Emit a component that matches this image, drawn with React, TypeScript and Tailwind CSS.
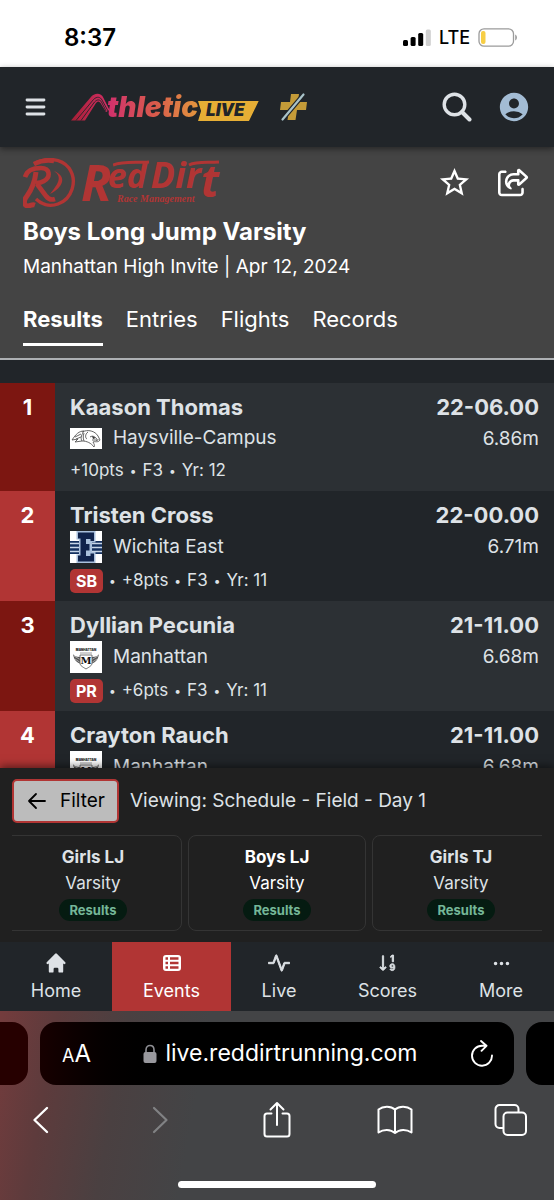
import React from "react";
import { FaRegShareFromSquare } from "react-icons/fa6";
import { HiHome } from "react-icons/hi";
import { MdAccountCircle, MdStarBorder } from "react-icons/md";
import { BsActivity, BsSortNumericDown, BsThreeDots } from "react-icons/bs";

function StatusBar() {
  return (
    <div className="flex h-[67px] shrink-0 items-center justify-between bg-white pt-2 pr-9 pl-16 text-black">
      <span className="text-2xl font-semibold">8:37</span>
      <div className="flex items-center gap-2">
        <svg width="28" height="18" viewBox="0 0 28 18" aria-hidden="true">
          <rect x="0" y="11" width="5" height="6" rx="1.5" />
          <rect x="7.6" y="8" width="5" height="9" rx="1.5" />
          <rect x="15.2" y="4" width="5" height="13" rx="1.5" />
          <rect x="22.8" y="0.5" width="5" height="16.500" rx="1.500" fill="#cfcfcf" />
        </svg>
        <span className="text-lg font-medium">LTE</span>
        <svg width="40" height="19" viewBox="0 0 40 19" aria-hidden="true">
          <rect x="1" y="0.800" width="34.500" height="17.400" rx="5" fill="none" stroke="#9b9b9b" strokeWidth="1.300" />
          <rect x="3" y="3" width="4.500" height="13" rx="2" fill="#f7ce45" />
          <path d="M37.300 6.500c2 .8 2 5.200 0 6z" fill="#8b8b8b" />
        </svg>
      </div>
    </div>
  );
}

function AthleticLogo() {
  return (
    <a href="#live" aria-label="AthleticLIVE" className="ml-6 flex h-8 items-end">
      <svg className="mb-0.5 shrink-0" width="40" height="28" viewBox="0 0 40 28" aria-hidden="true">
        <defs>
          <linearGradient id="swoosh" x1="0" x2="1">
            <stop offset="0" stopColor="#a51f35" />
            <stop offset="1" stopColor="#d52f66" />
          </linearGradient>
        </defs>
        <path
          d="M0 27.500 19.500 4.500C23.500-.5 30-.5 32.500 5L38.500 17l-3.500 2-5.500-9c-1.500-2-3-2-4.500 0L14 27.500z"
          fill="url(#swoosh)"
        />
        <path
          d="M5 27.500 22.500 6.500c3.500-3.500 7-2.500 8.500.5l6 11M10 27.500 23.500 9c3-3 5.500-2.500 7 0l4.500 9"
          fill="none"
          stroke="#212529"
          strokeWidth="0.900"
        />
      </svg>
      <span className="-ml-1 bg-linear-to-r from-[#d12d6c] via-[#d8594b] to-[#e39a3a] bg-clip-text pr-1 text-[28px] leading-8 font-black text-transparent italic">
        thletic
      </span>
      <span className="mb-0.5 -ml-1 flex h-5 items-center bg-[#e6ae35] pr-3.5 pl-2 text-[17px] font-black text-[#212529] italic [clip-path:polygon(0_0,100%_0,84%_100%,0_100%,5%_50%)]">
        LIVE
      </span>
    </a>
  );
}

function AppHeader() {
  return (
    <header className="z-10 flex h-20 shrink-0 items-center bg-[#212529] px-6 shadow-[0_2px_6px_rgba(0,0,0,0.45)]">
      <button type="button" aria-label="Menu">
        <svg width="23" height="20" viewBox="0 0 23 20" stroke="#dee2e6" strokeWidth="2.800" strokeLinecap="round">
          <path d="M3 3h17M3 10h17M3 17h17" />
        </svg>
      </button>
      <AthleticLogo />
      <svg className="ml-[21px] shrink-0" width="28" height="30" viewBox="0 0 28 30" aria-hidden="true">
        <path d="M11 2h8l-1 8h9l-1 8h-9l-1.500 10h-8L9 18H0l1-8h9z" fill="#c49b38" />
        <path d="M2 28 24 2" stroke="#212529" strokeWidth="4.500" />
        <path d="M2.500 27.500 23.500 2.500" stroke="#a9c3c9" strokeWidth="2.200" strokeLinecap="round" />
      </svg>
      <div className="ml-auto flex items-center gap-[26px]">
        <button type="button" aria-label="Search">
          <svg width="30" height="30" viewBox="0 0 30 30" fill="none" stroke="#dee2e6" strokeWidth="3.400" strokeLinecap="round">
            <circle cx="12.500" cy="12.500" r="10.300" />
            <path d="m20 20 7.500 7.500" strokeWidth="4" />
          </svg>
        </button>
        <button type="button" aria-label="Account" className="text-[#a3bcd4]">
          <MdAccountCircle size={34} className="-m-px" />
        </button>
      </div>
    </header>
  );
}

function RedDirtLogo() {
  return (
    <div className="flex h-[52px] items-center gap-1 font-['Open_Sans',sans-serif] text-[#b13534]">
      <svg width="54" height="50" viewBox="0 0 54 50" fill="none" stroke="#b13534" aria-hidden="true">
        <path d="M11 6C22-1 38 0 46 10c9 13 3 31-11 36-9 3-17 0-22-5" strokeWidth="3.400" />
        <path d="M11 6c6-3 14-4 20-3" strokeWidth="4.500" />
        <path d="M2 19c2-7 9-9 16-9 9 0 10 9 3 13-3 2-6 2-8 2" strokeWidth="4.600" />
        <path d="M13 14C12 23 9 31 4 38c-4 5-3 9 0 10 3 0 5-2 8-1" strokeWidth="5" />
        <path d="m14 26 9 12c3 4 6 4 9 3" strokeWidth="4.600" />
        <path d="M31 13c9 6 4 13-4 23 14-7 17-18 4-23Z" fill="#b13534" stroke="none" />
      </svg>
      <div className="relative flex h-full font-bold italic">
        <span className="text-[50px] leading-[50px]">R</span>
        <span className="-ml-1 text-[34px] leading-9">ed</span>
        <span className="ml-1 text-[36px] leading-9">Dir</span>
        <span className="text-[44px] leading-[46px]">t</span>
        <span className="absolute bottom-1 left-9 font-['Liberation_Serif',serif] text-[10px] leading-3 whitespace-nowrap">
          Race Management
        </span>
        <svg className="absolute top-[3px] left-[32px]" width="112" height="8" viewBox="0 0 112 8" fill="none" stroke="#b13534" strokeWidth="3" aria-hidden="true">
          <path d="M0 5c10-4 22-2 36-3M76 5c8-4 18-2 30-3" />
        </svg>
      </div>
    </div>
  );
}

const tabs = ["Results", "Entries", "Flights", "Records"];

function EventHero() {
  return (
    <section className="shrink-0 border-b-2 border-[#adb0b3] bg-[#444] px-[23px] pt-2.5 pb-3 text-white">
      <div className="flex items-start justify-between">
        <RedDirtLogo />
        <div className="flex items-center gap-[26px] pt-2 pr-0.5">
          <button type="button" aria-label="Favorite">
            <MdStarBorder size={35} />
          </button>
          <button type="button" aria-label="Share">
            <FaRegShareFromSquare size={31} />
          </button>
        </div>
      </div>
      <h1 className="mt-[3px] text-2xl leading-10 font-bold">Boys Long Jump Varsity</h1>
      <p className="text-[19px] leading-[30px]">Manhattan High Invite | Apr 12, 2024</p>
      <nav className="mt-[21px] flex gap-[23px] text-[22px] leading-8">
        {tabs.map((tab, i) => (
          <a
            key={tab}
            href={"#" + tab.toLowerCase()}
            className={i === 0 ? "border-b-3 border-white pb-2 font-bold" : "border-b-3 border-transparent pb-2"}
          >
            {tab}
          </a>
        ))}
      </nav>
    </section>
  );
}

function CampusMark() {
  return (
    <svg width="32" height="21" viewBox="0 0 32 21" aria-hidden="true">
      <path fill="#fff" d="M0 0h32v21H0z" />
      <g fill="none" stroke="#555" strokeWidth="0.900">
        <path d="M12 4C18 1 25 3 28 8l2 4c-2 3-5 1-7 2 1 2 2 3 1 5-3-4-7-6-12-6" />
        <path d="M14 3C9 3 6 6 2 12l6-1-3 3 7-1c-2-3 0-7 2-10ZM5 9l6-3M6 11l5-2" />
        <path d="M14 5c-1 3-1 5 0 8M18 4c-3 2-3 6-1 7M20 9c3-2 5 0 7 2M22 12h5" />
      </g>
      <path d="m22 8 4 2-3 1zM26 12l3-1-2 2z" fill="#333" />
    </svg>
  );
}

function EastMark() {
  return (
    <svg width="32" height="32" viewBox="0 0 32 32" aria-hidden="true">
      <path fill="#fff" d="M0 0h32v32H0z" />
      <path fill="#14305f" d="M0 10h32v13H0z" />
      <path d="M0 12.500h32M0 16.500h32M0 20.500h32" stroke="#c8d6e8" strokeWidth="1.300" />
      <path d="M6.500 0h19v11.500H22v9.500h3.500v11h-19v-8.500H9v-15H6.500z" fill="#a9c0dc" />
      <path d="M8 1.500h16V10h-3.500V8H16v5h3.500v6.500H16V25h4.500v-2.500H24v8H8v-6h2.500v-17H8z" fill="#10234c" />
    </svg>
  );
}

function ManhattanMark() {
  return (
    <svg width="32" height="32" viewBox="0 0 32 32" aria-hidden="true">
      <path fill="#fff" d="M0 0h32v32H0z" />
      <text x="16" y="10" textAnchor="middle" fontSize="3" fontWeight="900" fill="#222">MANHATTAN</text>
      <path d="M10 12h12" stroke="#888" strokeWidth="0.800" />
      <path d="M3 13c1 6 3 8 8 10l-1-7c-4 0-6-1-7-3ZM29 13c-1 6-3 8-8 10l1-7c4 0 6-1 7-3Z" fill="#555" />
      <path d="m4 15 7 4m-6-1 6 4m17-7-7 4m6-1-6 4" stroke="#ddd" strokeWidth="0.600" />
      <path d="M10 14h12v8c0 3-3 4-6 6-3-2-6-3-6-6z" fill="#fff" stroke="#555" strokeWidth="0.800" />
      <text x="16" y="23" textAnchor="middle" fontSize="10" fontWeight="700" fontFamily="DejaVu Serif" fill="#111">M</text>
    </svg>
  );
}

type Result = {
  place: number;
  name: string;
  school: string;
  Mark: () => React.JSX.Element;
  badge?: string;
  meta?: string[];
  feet: string;
  metres: string;
};

const results: Result[] = [
  { place: 1, name: "Kaason Thomas", school: "Haysville-Campus", Mark: CampusMark, meta: ["+10pts", "F3", "Yr: 12"], feet: "22-06.00", metres: "6.86m" },
  { place: 2, name: "Tristen Cross", school: "Wichita East", Mark: EastMark, badge: "SB", meta: ["+8pts", "F3", "Yr: 11"], feet: "22-00.00", metres: "6.71m" },
  { place: 3, name: "Dyllian Pecunia", school: "Manhattan", Mark: ManhattanMark, badge: "PR", meta: ["+6pts", "F3", "Yr: 11"], feet: "21-11.00", metres: "6.68m" },
  { place: 4, name: "Crayton Rauch", school: "Manhattan", Mark: ManhattanMark, feet: "21-11.00", metres: "6.68m" },
];

function ResultRow({ result }: { result: Result }) {
  const { place, name, school, Mark, badge, meta, feet, metres } = result;
  return (
    <li className="flex bg-[#212529] odd:bg-[#2c3034]">
      <div className={(place % 2 ? "bg-[#7c1611]" : "bg-[#b13534]") + " w-[55px] shrink-0 pt-2 text-center text-[22px] leading-8 font-bold text-white"}>
        {place}
      </div>
      <div className="min-w-0 flex-1 pt-2 pb-[3px] pl-[15px]">
        <h2 className="text-[22px] leading-8 font-bold">{name}</h2>
        <div className="flex min-h-[30px] items-center gap-[11px] text-[19px]">
          <Mark />
          <span>{school}</span>
        </div>
        {meta && (
          <div className="flex h-[35px] items-center gap-1.5 text-[17px]">
            {badge && <span className="flex h-6 items-center rounded-[5px] bg-[#b13534] px-1.5 text-base font-bold text-white">{badge}</span>}
            {meta.map((part, i) => (
              <React.Fragment key={part}>
                {(i > 0 || badge) && <span className="text-xs">•</span>}
                <span>{part}</span>
              </React.Fragment>
            ))}
          </div>
        )}
      </div>
      <div className="pt-2 pr-[15px] text-right">
        <div className="text-[22px] leading-8 font-bold">{feet}</div>
        <div className="text-[19px] leading-8">{metres}</div>
      </div>
    </li>
  );
}

const schedule = ["Girls LJ", "Boys LJ", "Girls TJ"];

function EventPicker() {
  return (
    <section className="z-10 shrink-0 bg-[#202020] px-3 pt-[11px] pb-[11px] shadow-[0_-2px_8px_rgba(0,0,0,0.5)]">
      <div className="flex items-center gap-[11px] text-[19px] text-[#dee2e6]">
        <button type="button" className="flex h-11 items-center gap-3 rounded-[5px] border-2 border-[#b13534] bg-[#bcbcbc] px-3 text-black">
          <svg width="22" height="20" viewBox="0 0 22 20" fill="none" stroke="black" strokeWidth="1.800" strokeLinecap="round" strokeLinejoin="round" aria-hidden="true">
            <path d="M19 10H3m7-7-7 7 7 7" />
          </svg>
          Filter
        </button>
        <span>Viewing: Schedule - Field - Day 1</span>
      </div>
      <div className="mt-3 flex justify-center gap-1.5 overflow-hidden">
        {schedule.map((event, i) => (
          <a
            key={event}
            href="#event"
            className={(i === 1 ? "text-white" : "text-[#dee2e6]") + " flex h-24 w-[178px] shrink-0 flex-col items-center rounded-lg border border-[#343434] pt-2"}
          >
            <strong className="text-[17px] leading-[26px] font-bold">{event}</strong>
            <span className="text-[17px] leading-[26px]">Varsity</span>
            <span className="mt-[3px] rounded-full bg-[#051b11] px-2.5 text-[13px] leading-[22px] font-bold text-[#75b798]">Results</span>
          </a>
        ))}
      </div>
    </section>
  );
}

function EventsIcon() {
  return (
    <svg width="20" height="18" viewBox="0 0 20 18" aria-hidden="true">
      <path
        fill="currentColor"
        fillRule="evenodd"
        d="M4 1h12a3 3 0 0 1 3 3v10a3 3 0 0 1-3 3H4a3 3 0 0 1-3-3V4a3 3 0 0 1 3-3ZM3.500 3.300v2.400H6V3.300zM8 3.300v2.400h8.500V3.300zM3.500 7.800v2.400H6V7.800zM8 7.800v2.400h8.500V7.800zM3.500 12.300v2.400H6v-2.400zM8 12.300v2.400h8.500v-2.400z"
      />
    </svg>
  );
}

const navItems = [
  { label: "Home", width: "w-[112px]", icon: <HiHome size={24} /> },
  { label: "Events", width: "w-[119px] bg-[#b13534] text-white", icon: <EventsIcon /> },
  { label: "Live", width: "w-24", icon: <BsActivity size={22} stroke="currentColor" strokeWidth={0.7} /> },
  { label: "Scores", width: "w-[121px]", icon: <BsSortNumericDown size={20} stroke="currentColor" strokeWidth={0.7} /> },
  { label: "More", width: "flex-1", icon: <BsThreeDots size={19} /> },
];

function BottomNav() {
  return (
    <nav className="z-10 flex h-[69px] shrink-0 bg-[#212529] text-[#dee2e6]">
      {navItems.map(({ label, width, icon }) => (
        <a key={label} href={"#" + label.toLowerCase()} className={width + " flex flex-col items-center gap-1 pt-[11px] text-lg leading-7"}>
          <span className="flex h-5 items-center">{icon}</span>
          {label}
        </a>
      ))}
    </nav>
  );
}

function BrowserBar() {
  return (
    <footer className="flex h-[189px] shrink-0 flex-col overflow-hidden bg-[#434446] bg-[linear-gradient(100deg,#743c3d_0%,#5d3b3c_10%,#4a4041_22%,#434446_36%)] pt-[11px] text-white">
      <div className="flex h-[63px] gap-3">
        <div className="w-7 shrink-0 rounded-r-2xl bg-[#260000]" />
        <div className="flex flex-1 items-center rounded-2xl bg-linear-to-r from-[#170000] via-black via-30% to-black px-5">
          <button type="button" aria-label="Page settings" className="ml-0.5 flex items-baseline">
            <span className="text-lg">A</span>
            <span className="text-2xl">A</span>
          </button>
          <div className="flex flex-1 items-center justify-center gap-2">
            <svg width="14" height="20" viewBox="0 0 14 20" aria-hidden="true">
              <path d="M3 9V6c0-6 8-6 8 0v3" fill="none" stroke="#8e8e93" strokeWidth="1.600" />
              <rect x="0.500" y="8" width="13" height="11" rx="2" fill="#98989d" />
            </svg>
            <span className="text-[23px]">live.reddirtrunning.com</span>
          </div>
          <button type="button" aria-label="Reload">
            <svg width="24" height="28" viewBox="0 0 24 28" fill="none" stroke="white" strokeWidth="1.900" strokeLinecap="round" strokeLinejoin="round">
              <path d="M15.500 5.700H12A10 10 0 1 0 22 15.500M11 1l5.500 4.800-5 5" />
            </svg>
          </button>
        </div>
        <div className="w-7 shrink-0 rounded-l-2xl bg-black" />
      </div>
      <div className="flex items-center justify-between pt-4 pr-[26px] pl-8">
        <button type="button" aria-label="Back">
          <svg width="18" height="28" viewBox="0 0 18 28" fill="none" stroke="white" strokeWidth="2.400" strokeLinecap="round" strokeLinejoin="round">
            <path d="M15 2 2.500 14 15 26" />
          </svg>
        </button>
        <button type="button" aria-label="Forward" className="ml-7">
          <svg width="18" height="28" viewBox="0 0 18 28" fill="none" stroke="#818284" strokeWidth="2.200" strokeLinecap="round" strokeLinejoin="round">
            <path d="M3 2l12.500 12L3 26" />
          </svg>
        </button>
        <button type="button" aria-label="Share page" className="ml-5">
          <svg width="30" height="38" viewBox="0 0 30 38" fill="none" stroke="white" strokeWidth="2" strokeLinecap="round" strokeLinejoin="round">
            <path d="M9.500 12.500H5a2.500 2.500 0 0 0-2.500 2.500v18A2.500 2.500 0 0 0 5 35.500h20a2.500 2.500 0 0 0 2.500-2.500V15a2.500 2.500 0 0 0-2.500-2.500h-4.500M15 24V2.500M8.500 8.500l6.500-6.500 6.500 6.500" />
          </svg>
        </button>
        <button type="button" aria-label="Bookmarks" className="ml-3">
          <svg width="36" height="30" viewBox="0 0 36 30" fill="none" stroke="white" strokeWidth="2" strokeLinejoin="round">
            <path d="M18 4.500C13.500.5 6 1 1.500 4.500v23c5-3.500 12-3.500 16.500.5 4.500-4 11.500-4 16.500-.5v-23C30 1 22.500.5 18 4.500ZM18 4.500V28" />
          </svg>
        </button>
        <button type="button" aria-label="Tabs" className="ml-2">
          <svg width="34" height="34" viewBox="0 0 34 34" fill="none" stroke="white" strokeWidth="2">
            <rect x="9.500" y="9.500" width="22.500" height="22.500" rx="4" />
            <path d="M9 25H5.500a4 4 0 0 1-4-4V6a4 4 0 0 1 4-4h15a4 4 0 0 1 4 4v3" />
          </svg>
        </button>
      </div>
      <div className="mx-auto mt-auto mb-3 h-[7px] w-[198px] rounded-full bg-white" />
    </footer>
  );
}

export default function App() {
  return (
    <div className="flex h-screen flex-col bg-[#212529] font-['Inter',sans-serif]">
      <StatusBar />
      <AppHeader />
      <EventHero />
      <main className="min-h-0 flex-1 overflow-hidden pt-[23px] text-[#dee2e6]">
        <ol>
          {results.map((result) => (
            <ResultRow key={result.place} result={result} />
          ))}
        </ol>
      </main>
      <EventPicker />
      <BottomNav />
      <BrowserBar />
    </div>
  );
}
